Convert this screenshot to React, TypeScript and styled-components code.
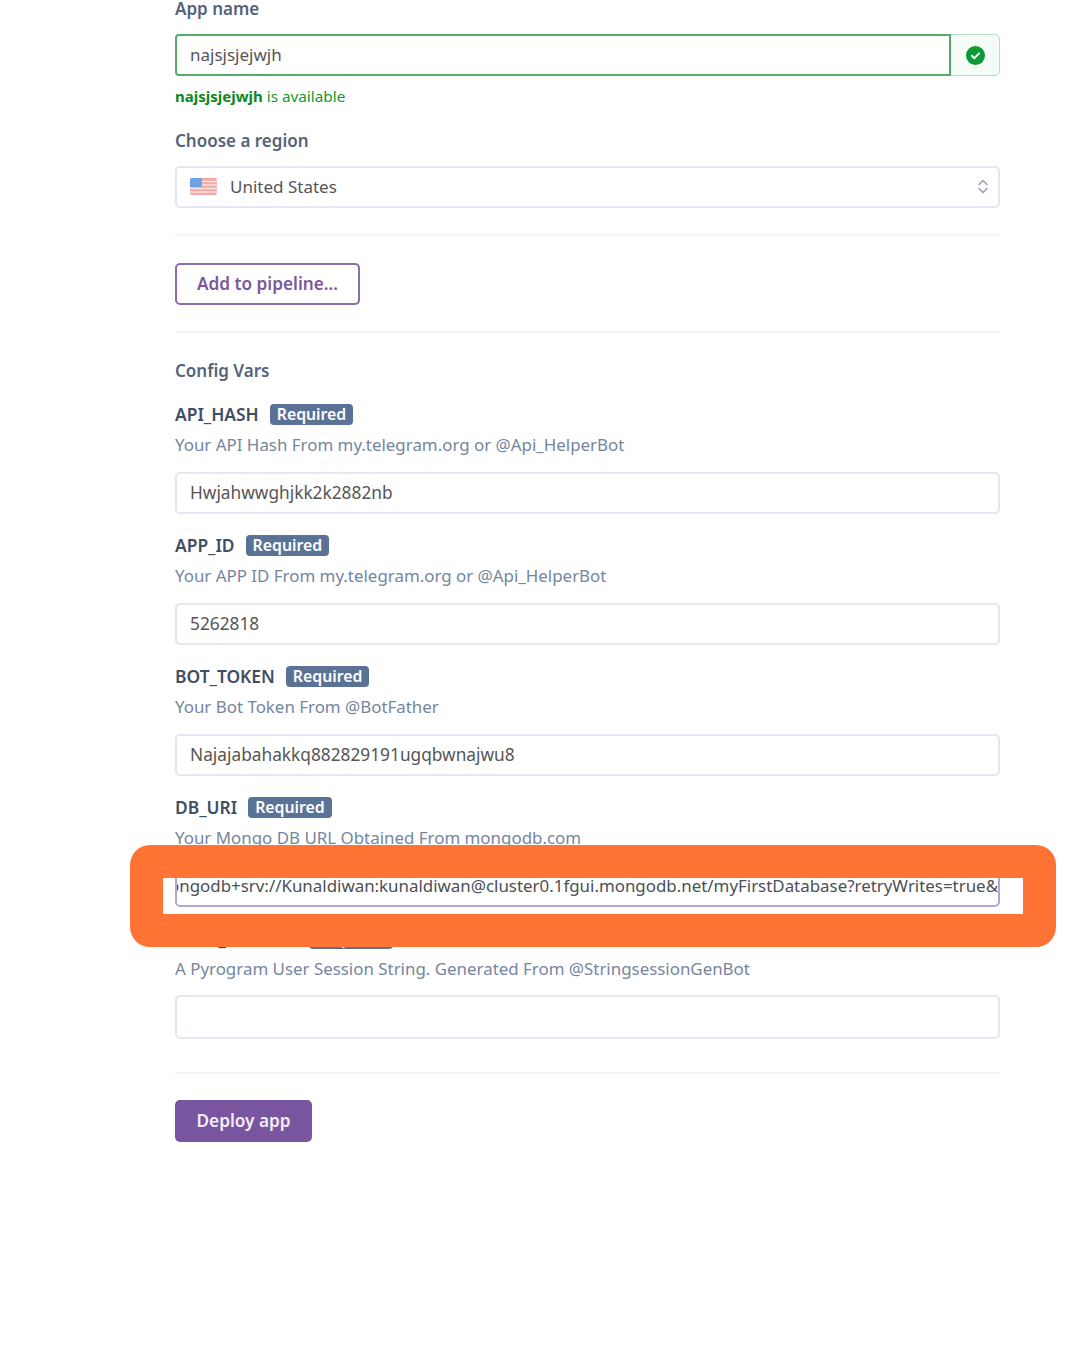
import React from "react";
import styled, { createGlobalStyle } from "styled-components";

const Global = createGlobalStyle`
  html, body { margin: 0; padding: 0; background: #fff; }
  body { font-family: "Noto Sans", "Liberation Sans", sans-serif; }
  #root { width: 1080px; height: 1364px; overflow: hidden; position: relative; }
`;

const Page = styled.main`
  box-sizing: border-box;
  width: 825px;
  margin-left: 175px;
  display: flex;
  flex-direction: column;
`;

const Heading = styled.div<{ $top: number }>`
  font-size: 17px;
  font-weight: 600;
  line-height: 24px;
  color: #54637a;
  margin-top: ${(p) => p.$top}px;
`;

const AppRow = styled.div`
  display: flex;
  height: 42px;
  margin-top: 13px;
`;

const GreenInput = styled.div`
  flex: 1;
  box-sizing: border-box;
  border: 2px solid #54ab6a;
  border-radius: 4px 0 0 4px;
  padding: 0 0 2px 13px;
  display: flex;
  align-items: center;
  font-size: 17px;
  color: #555;
`;

const Addon = styled.div`
  box-sizing: border-box;
  width: 49px;
  border: 1px solid #b5e0c2;
  border-left: 0;
  border-radius: 0 5px 5px 0;
  background: #f5fbf7;
  display: flex;
  align-items: center;
  justify-content: center;
`;

const Available = styled.div`
  font-size: 15.3px;
  line-height: 20px;
  color: #119a2c;
  margin-top: 10px;
  b { font-weight: 700; font-size: 15px; color: #078a1e; }
`;

const Box = styled.div<{ $height?: number }>`
  box-sizing: border-box;
  height: ${(p) => p.$height ?? 42}px;
  border: 2px solid #e3e7f1;
  border-radius: 5px;
  background: #fff;
  padding: 0 13px 2px;
  display: flex;
  align-items: center;
  font-size: 17.3px;
  color: #555;
  white-space: nowrap;
`;

const SelectBox = styled(Box)`
  margin-top: 13px;
  gap: 13px;
  font-size: 17px;
`;

const Spacer = styled.span`
  flex: 1;
`;

const Rule = styled.hr<{ $top: number }>`
  border: 0;
  height: 2px;
  background: #f2f4f8;
  width: 100%;
  margin: ${(p) => p.$top}px 0 0;
`;

const OutlineButton = styled.button`
  box-sizing: border-box;
  align-self: flex-start;
  width: 185px;
  height: 42px;
  margin-top: 27px;
  border: 2px solid #8b6cae;
  border-radius: 5px;
  background: #fff;
  color: #79589f;
  font: 600 17.2px "Noto Sans", sans-serif;
  padding: 0 0 2px;
`;

const SolidButton = styled.button`
  box-sizing: border-box;
  align-self: flex-start;
  width: 137px;
  height: 42px;
  margin-top: 26px;
  border: 0;
  border-radius: 5px;
  background: #79559f;
  color: #f3edf8;
  font: 600 17.2px "Noto Sans", sans-serif;
  padding: 0 0 2px;
`;

const Field = styled.section`
  margin-top: 19px;
  display: flex;
  flex-direction: column;
`;

const NameRow = styled.div`
  display: flex;
  align-items: center;
  gap: 11px;
  height: 24px;
`;

const VarName = styled.span`
  font-size: 17.4px;
  font-weight: 600;
  color: #3f4e65;
`;

const Badge = styled.span`
  background: #5a7296;
  color: #fff;
  font-size: 15.8px;
  font-weight: 600;
  line-height: 21px;
  padding: 0 7px;
  border-radius: 4px;
`;

const Description = styled.p<{ $after?: number }>`
  margin: 7px 0 ${(p) => p.$after ?? 15}px;
  font-size: 16.9px;
  line-height: 24px;
  color: #76869e;
  white-space: nowrap;
`;

const ActiveBox = styled(Box)`
  padding: 0 0 2px;
  justify-content: flex-end;
  overflow: hidden;
  border-color: #b7a3d3;
  font-size: 16.9px;
  color: #4c4f57;
`;

const ChevronSlot = styled.span`
  display: flex;
  margin-right: -3px;
`;

const Annotation = styled.div`
  position: absolute;
  left: 130px;
  top: 845px;
  width: 926px;
  height: 102px;
  box-sizing: border-box;
  border: 33px solid #ff7335;
  border-radius: 20px;
  pointer-events: none;
`;

const fields = [
  { name: "API_HASH", desc: "Your API Hash From my.telegram.org or @Api_HelperBot", value: "Hwjahwwghjkk2k2882nb" },
  { name: "APP_ID", desc: "Your APP ID From my.telegram.org or @Api_HelperBot", value: "5262818" },
  { name: "BOT_TOKEN", desc: "Your Bot Token From @BotFather", value: "Najajabahakkq882829191ugqbwnajwu8" },
];

const Flag = () => (
  <svg width="27" height="17" viewBox="0 0 27 17" aria-hidden="true">
    <rect width="27" height="17" rx="2" fill="#f3a7a5" />
    <path d="M0 3.500h27M0 7h27M0 10.500h27M0 14h27" stroke="#fbe3e2" strokeWidth="1.500" />
    <path d="M2 0h10v9H0V2a2 2 0 0 1 2-2z" fill="#6da3e6" />
  </svg>
);

const Check = () => (
  <svg width="19" height="19" viewBox="0 0 19 19" aria-hidden="true">
    <circle cx="9.500" cy="9.500" r="9.500" fill="#0a9b34" />
    <path d="M5.800 9.800l2.500 2.400 4.800-4.800" fill="none" stroke="#fff" strokeWidth="2" strokeLinecap="round" strokeLinejoin="round" />
  </svg>
);

const Chevrons = () => (
  <svg width="10" height="15" viewBox="0 0 10 15" aria-hidden="true">
    <path d="M1 5.500L5 1.500l4 4M1 9.500l4 4 4-4" fill="none" stroke="#9aa3b5" strokeWidth="1.600" strokeLinecap="round" strokeLinejoin="round" />
  </svg>
);

export default function App() {
  return (
    <>
      <Global />
      <Page>
        <Heading $top={-3}>App name</Heading>
        <AppRow>
          <GreenInput>najsjsjejwjh</GreenInput>
          <Addon><Check /></Addon>
        </AppRow>
        <Available><b>najsjsjejwjh</b> is available</Available>
        <Heading $top={23}>Choose a region</Heading>
        <SelectBox>
          <Flag />
          United States
          <Spacer />
          <ChevronSlot><Chevrons /></ChevronSlot>
        </SelectBox>
        <Rule $top={26} />
        <OutlineButton>Add to pipeline...</OutlineButton>
        <Rule $top={26} />
        <Heading $top={26}>Config Vars</Heading>
        {fields.map((f) => (
          <Field key={f.name}>
            <NameRow><VarName>{f.name}</VarName><Badge>Required</Badge></NameRow>
            <Description>{f.desc}</Description>
            <Box>{f.value}</Box>
          </Field>
        ))}
        <Field>
          <NameRow><VarName>DB_URI</VarName><Badge>Required</Badge></NameRow>
          <Description>Your Mongo DB URL Obtained From mongodb.com</Description>
          <ActiveBox>mongodb+srv://Kunaldiwan:kunaldiwan@cluster0.1fgui.mongodb.net/myFirstDatabase?retryWrites=true&amp;</ActiveBox>
        </Field>
        <Field>
          <NameRow><VarName>USER_SESSION</VarName><Badge>Required</Badge></NameRow>
          <Description $after={14}>A Pyrogram User Session String. Generated From @StringsessionGenBot</Description>
          <Box $height={44} />
        </Field>
        <Rule $top={33} />
        <SolidButton>Deploy app</SolidButton>
      </Page>
      <Annotation />
    </>
  );
}
